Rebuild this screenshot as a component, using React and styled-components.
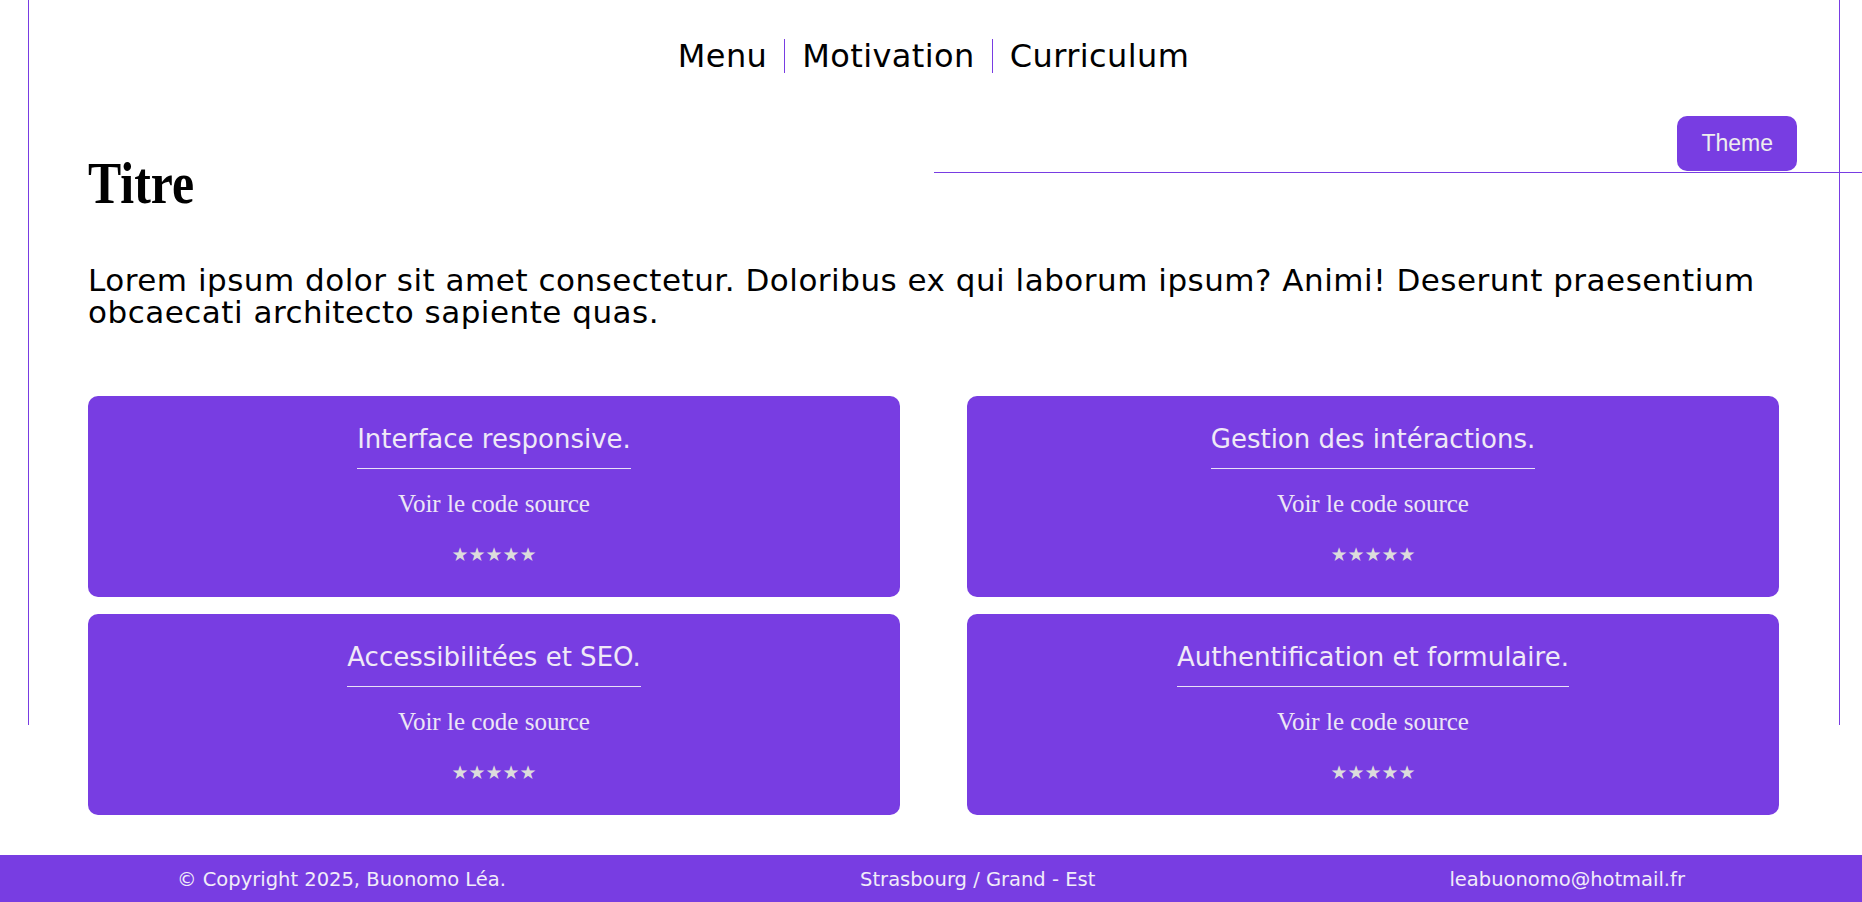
import React from "react";
import styled, { createGlobalStyle } from "styled-components";

const purple = "#783de2";

const Global = createGlobalStyle`
  html, body { margin: 0; padding: 0; background: #fff; }
  body { font-family: "DejaVu Sans", "Noto Sans", sans-serif; color: #000; }
  *, *::before, *::after { box-sizing: border-box; }
`;

const Main = styled.main`
  position: relative;
  margin: 0 22px 0 28px;
  padding: 0 61px 40px 60px;
  &::before {
    content: "";
    position: absolute;
    top: 0;
    left: 0;
    right: 0;
    height: 725px;
    border-left: 1px solid ${purple};
    border-right: 1px solid ${purple};
    pointer-events: none;
  }
`;

const NavList = styled.ul`
  list-style: none;
  margin: 0;
  padding: 39px 0 0;
  display: flex;
  justify-content: center;
`;

const NavItem = styled.li`
  font-size: 32px;
  line-height: 34px;
  letter-spacing: 0.4px;
  padding: 0 17px;
  & + & {
    border-left: 1px solid ${purple};
  }
`;

const HeadRow = styled.div`
  display: grid;
  grid-template-columns: 1fr 1fr;
  align-items: start;
  margin-top: 43px;
`;

const Title = styled.h1`
  margin: 33px 0 0;
  font-family: "Liberation Serif", "Times New Roman", serif;
  font-weight: 700;
  font-size: 60px;
  line-height: 69px;
  transform: scaleX(0.83);
  transform-origin: left center;
`;

const ThemeBar = styled.div`
  margin-right: -83px;
  display: flex;
  justify-content: flex-end;
  padding: 0 65px 1px 0;
  border-bottom: 1px solid ${purple};
`;

const ThemeButton = styled.button`
  height: 55px;
  padding: 0 24px;
  border: none;
  border-radius: 10px;
  background: ${purple};
  color: #eee;
  font-family: "Liberation Sans", Arial, sans-serif;
  font-size: 23px;
  cursor: pointer;
`;

const Intro = styled.p`
  margin: 46px 0 0;
  font-size: 31px;
  line-height: 32px;
  letter-spacing: 0.5px;
`;

const CardGrid = styled.section`
  margin-top: 68px;
  display: grid;
  grid-template-columns: 1fr 1fr;
  column-gap: 67px;
  row-gap: 17px;
`;

const Card = styled.article`
  height: 201px;
  background: ${purple};
  border-radius: 10px;
  padding: 28px 20px 0;
  display: flex;
  flex-direction: column;
  align-items: center;
  text-align: center;
`;

const CardTitle = styled.h2`
  margin: 0;
  font-size: 26px;
  font-weight: 400;
  line-height: normal;
  color: #efe9f7;
  padding-bottom: 14px;
  border-bottom: 1px solid #e9e1f7;
`;

const SourceLink = styled.a`
  margin-top: 21px;
  font-family: "Liberation Serif", "Times New Roman", serif;
  font-size: 25px;
  line-height: normal;
  color: #ece6f6;
  text-decoration: none;
`;

const Stars = styled.div`
  margin-top: 25px;
  font-size: 19px;
  line-height: 22px;
  color: #dcdcdc;
`;

const Footer = styled.footer`
  background: ${purple};
  display: flex;
  justify-content: space-around;
  padding: 13px 0 11px;
  font-size: 19.5px;
  line-height: 23px;
  color: #f1ecf9;
`;

const cards = [
  "Interface responsive.",
  "Gestion des intéractions.",
  "Accessibilitées et SEO.",
  "Authentification et formulaire.",
];

export default function App() {
  return (
    <>
      <Global />
      <Main>
        <nav>
          <NavList>
            <NavItem>Menu</NavItem>
            <NavItem>Motivation</NavItem>
            <NavItem>Curriculum</NavItem>
          </NavList>
        </nav>
        <HeadRow>
          <Title>Titre</Title>
          <ThemeBar>
            <ThemeButton>Theme</ThemeButton>
          </ThemeBar>
        </HeadRow>
        <Intro>
          Lorem ipsum dolor sit amet consectetur. Doloribus ex qui laborum ipsum? Animi! Deserunt
          praesentium obcaecati architecto sapiente quas.
        </Intro>
        <CardGrid>
          {cards.map((t) => (
            <Card key={t}>
              <CardTitle>{t}</CardTitle>
              <SourceLink href="#">Voir le code source</SourceLink>
              <Stars>★★★★★</Stars>
            </Card>
          ))}
        </CardGrid>
      </Main>
      <Footer>
        <span>© Copyright 2025, Buonomo Léa.</span>
        <span>Strasbourg / Grand - Est</span>
        <span>leabuonomo@hotmail.fr</span>
      </Footer>
    </>
  );
}
